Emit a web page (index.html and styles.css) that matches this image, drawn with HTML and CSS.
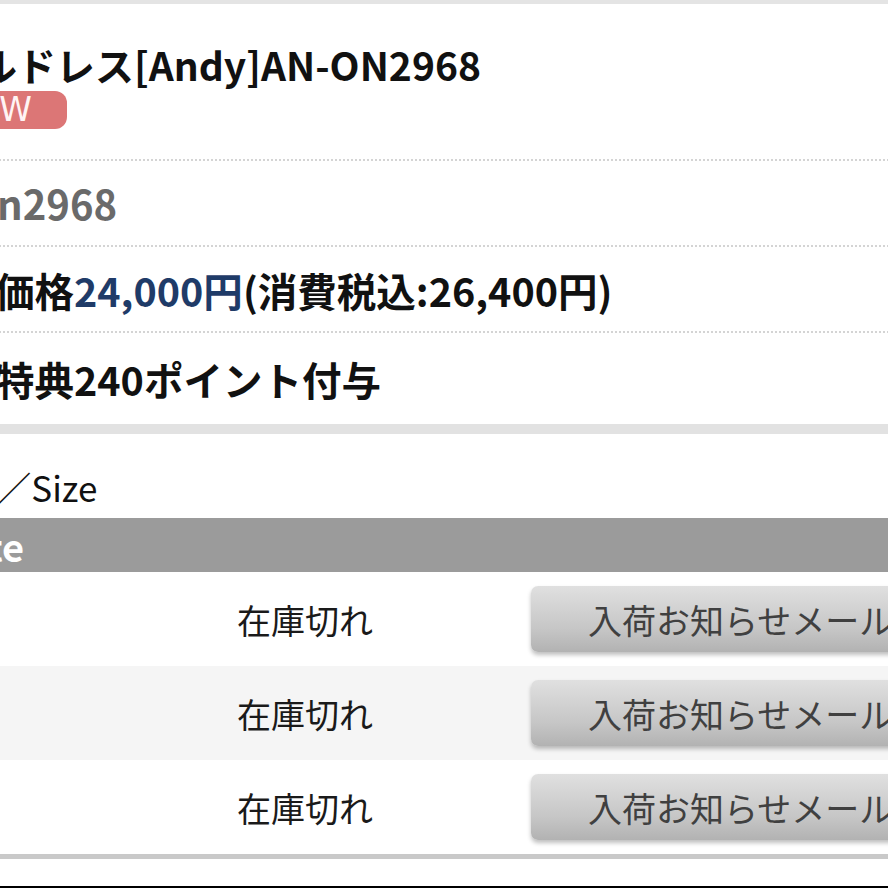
FILE: index.html
```html
<!DOCTYPE html>
<html lang="ja">
<head>
<meta charset="utf-8">
<title>カクテルドレス[Andy]AN-ON2968</title>
<link rel="stylesheet" href="styles.css">
</head>
<body>
<div class="topband"></div>
<div class="page">
  <section class="info">
    <div class="head">
      <h1 class="title">カクテルドレス[Andy]AN-ON2968</h1>
      <span class="badge">NEW</span>
    </div>
    <div class="row code">No.on2968</div>
    <div class="row price">販売価格<span class="yen">24,000円</span>(消費税込:26,400円)</div>
    <div class="row points">会員特典240ポイント付与</div>
  </section>
  <div class="band"></div>
  <section class="stock">
    <div class="stock-title">Color／Size</div>
    <div class="color-head">White</div>
    <div class="stock-row">
      <div class="size">S</div>
      <div class="status">在庫切れ</div>
      <div class="action"><button class="notify">入荷お知らせメール</button></div>
    </div>
    <div class="stock-row alt">
      <div class="size">M</div>
      <div class="status">在庫切れ</div>
      <div class="action"><button class="notify">入荷お知らせメール</button></div>
    </div>
    <div class="stock-row">
      <div class="size">L</div>
      <div class="status">在庫切れ</div>
      <div class="action"><button class="notify">入荷お知らせメール</button></div>
    </div>
  </section>
  <div class="endline"></div>
</div>
<div class="bottomedge"></div>
</body>
</html>
```
FILE: styles.css
```css
html, body {
  margin: 0;
  padding: 0;
  background: #fff;
  overflow: hidden;
  height: 888px;
}
body {
  font-family: "Noto Sans CJK JP", "Noto Sans", sans-serif;
  color: #111;
  position: relative;
}
.topband {
  height: 4px;
  background: #e4e4e4;
}
.page {
  margin-left: -84px;
  width: 1060px;
}
.head {
  padding: 35px 0 30px;
  border-bottom: 2px dotted #d4d4d4;
}
.title {
  margin: 0;
  font-size: 39px;
  line-height: 50px;
  font-weight: 700;
  text-indent: -55px;
  white-space: nowrap;
}
.badge {
  display: inline-block;
  box-sizing: border-box;
  margin-top: 2px;
  width: 151px;
  height: 38px;
  line-height: 38px;
  padding-right: 31px;
  border-radius: 12px;
  background: #dc7676;
  color: #fff4f4;
  font-family: "DejaVu Sans", sans-serif;
  font-size: 33px;
  font-weight: 400;
  letter-spacing: 4px;
  text-align: right;
  vertical-align: top;
  white-space: nowrap;
}
.row {
  height: 84px;
  display: flex;
  align-items: center;
  border-bottom: 2px dotted #d4d4d4;
  font-size: 39.5px;
  font-weight: 700;
  white-space: nowrap;
}
.code {
  color: #6a6a6a;
  font-size: 40px;
  text-indent: -11px;
}
.yen {
  color: #1f3b68;
}
.points {
  height: 91px;
  border-bottom: 0;
}
.band {
  height: 10px;
  background: #e2e2e2;
}
.stock-title {
  height: 64px;
  padding-top: 20px;
  display: flex;
  align-items: center;
  font-size: 35px;
  font-weight: 400;
  color: #111;
  white-space: nowrap;
  text-indent: -8px;
}
.color-head {
  height: 54px;
  display: flex;
  align-items: center;
  background: #9b9b9b;
  color: #fff;
  font-size: 38px;
  font-weight: 700;
}
.stock-row {
  display: grid;
  grid-template-columns: 174px 430px 1fr;
  align-items: center;
  height: 94px;
  background: #fff;
}
.stock-row.alt {
  background: #f5f5f5;
}
.size {
  font-size: 32px;
}
.status {
  text-align: center;
  font-size: 34px;
  font-weight: 400;
  color: #1a1a1a;
}
.action {
  padding-left: 11px;
}
.notify {
  display: block;
  box-sizing: border-box;
  width: 420px;
  height: 66px;
  border: 0;
  border-radius: 7px;
  background: linear-gradient(#e0e0e0, #c6c6c6 65%, #b2b2b2);
  box-shadow: 0 3px 4px rgba(0,0,0,0.25);
  font-family: "Noto Sans CJK JP", sans-serif;
  font-size: 34px;
  color: #404040;
  text-align: left;
  padding: 0 0 0 57px;
  white-space: nowrap;
}
.endline {
  height: 5px;
  background: #c9c9c9;
}
.bottomedge {
  position: absolute;
  left: 0;
  right: 0;
  bottom: 0;
  height: 2px;
  background: #000;
}
```
